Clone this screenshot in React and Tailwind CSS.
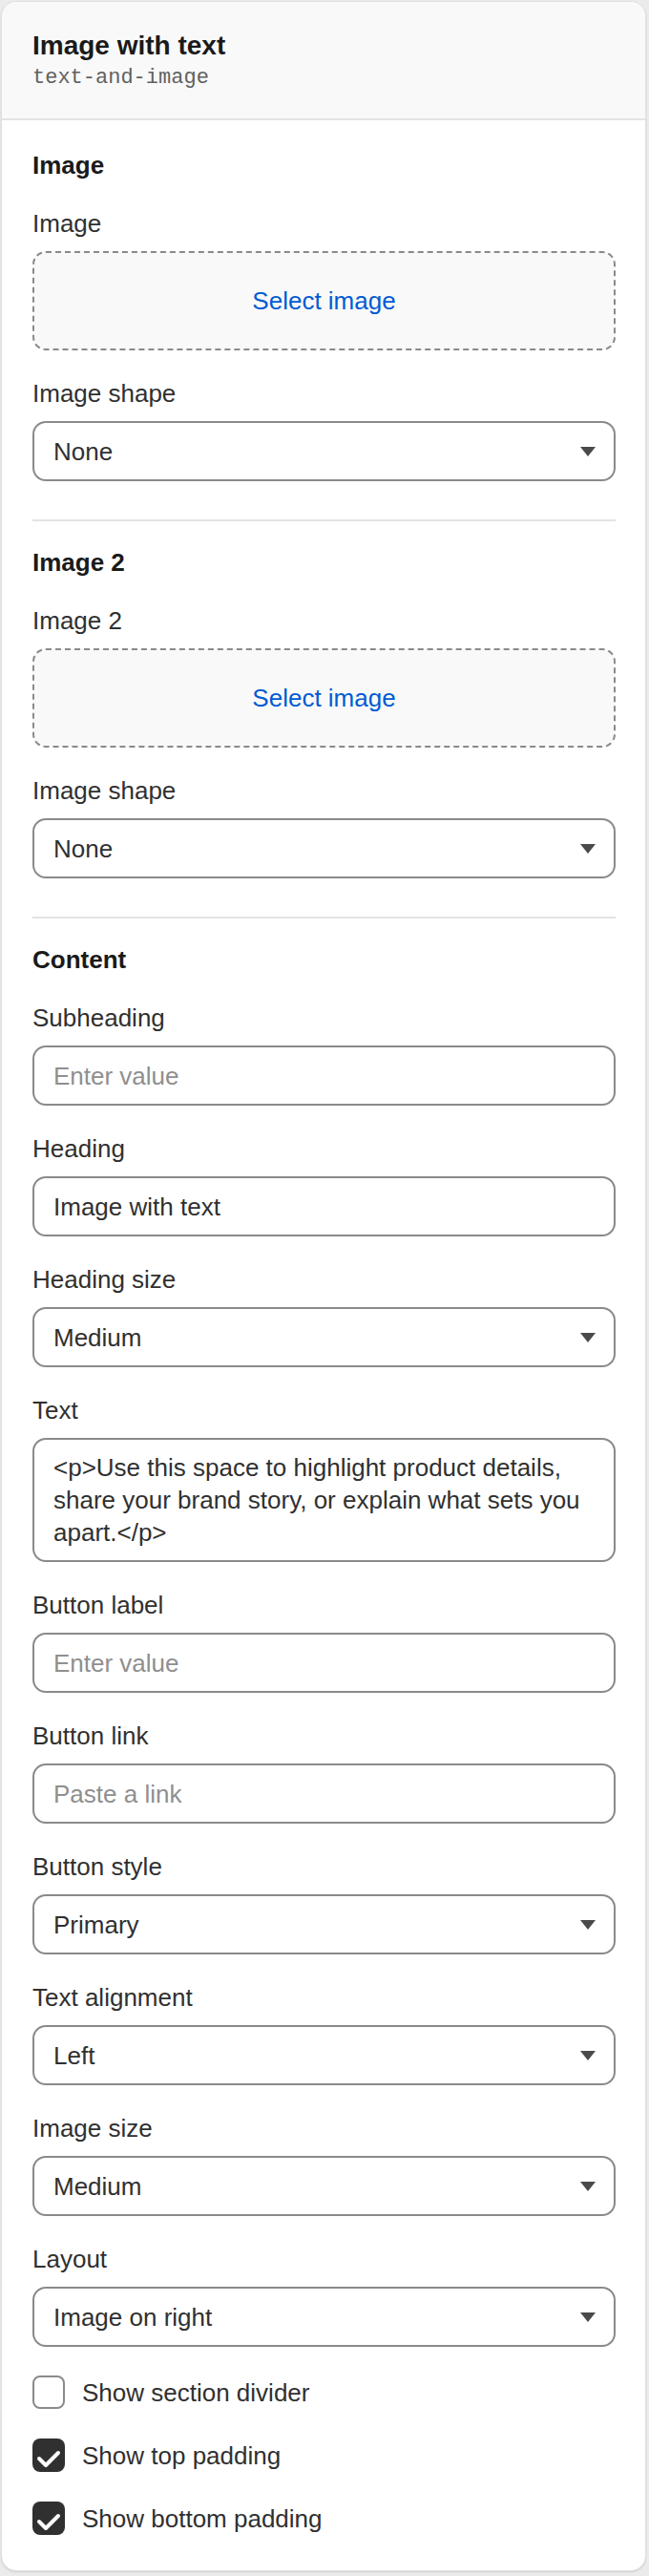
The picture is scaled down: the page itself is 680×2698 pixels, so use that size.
import React from "react";

const font = { fontFamily: '"Liberation Sans", Arial, sans-serif' };

const Label = ({ children }) => (
  <div className="text-[26px] leading-[32px] text-[#303030] mb-[13px]">{children}</div>
);

const SectionTitle = ({ children }) => (
  <h3 className="text-[26px] leading-[32px] font-bold text-[#1a1a1a]">{children}</h3>
);

const ImagePicker = ({ label }) => (
  <div>
    <Label>{label}</Label>
    <div className="h-[104px] flex items-center justify-center rounded-[14px] border-2 border-dashed border-[#8a8a8a] bg-[#f9f9f9]">
      <span className="text-[26px] leading-[32px] text-[#005bd3]">Select image</span>
    </div>
  </div>
);

const SelectField = ({ label, value }) => (
  <div>
    <Label>{label}</Label>
    <div className="h-[63px] flex items-center justify-between pl-[20px] pr-[19px] rounded-[14px] border-2 border-[#8a8a8a] bg-white">
      <span className="text-[26px] leading-[32px] text-[#303030]">{value}</span>
      <svg width="16" height="10" viewBox="0 0 16 10">
        <path d="M0 0 H16 L8 10 Z" fill="#4a4a4a" />
      </svg>
    </div>
  </div>
);

const TextField = ({ label, value, placeholder }) => (
  <div>
    <Label>{label}</Label>
    <div className="h-[63px] flex items-center pl-[20px] pr-[19px] rounded-[14px] border-2 border-[#8a8a8a] bg-white">
      {value ? (
        <span className="text-[26px] leading-[32px] text-[#303030]">{value}</span>
      ) : (
        <span className="text-[26px] leading-[32px] text-[#8f8f8f]">{placeholder}</span>
      )}
    </div>
  </div>
);

const Check = ({ checked, label }) => (
  <div className="h-[37px] flex items-center gap-[18px]">
    {checked ? (
      <div className="w-[34px] h-[35px] rounded-[8px] bg-[#303030] flex items-center justify-center">
        <svg width="34" height="35" viewBox="0 0 34 35">
          <path d="M7 21 L14 28 L27 15" fill="none" stroke="#fff" strokeWidth="4" strokeLinecap="round" strokeLinejoin="round" />
        </svg>
      </div>
    ) : (
      <div className="w-[34px] h-[35px] rounded-[8px] border-2 border-[#8a8a8a] bg-white" />
    )}
    <span className="text-[26px] leading-[32px] text-[#303030]">{label}</span>
  </div>
);

export default function App() {
  return (
    <div className="min-h-screen bg-[#ebebeb] pt-px pl-px pr-[3px] pb-[5px]" style={font}>
      <div className="bg-white rounded-[16px] border border-[#e0e0e0] overflow-hidden shadow-[0_1px_2px_rgba(0,0,0,0.12)]">
        {/* Header */}
        <div className="bg-[#f9f9f9] border-b-2 border-[#e3e3e3] pl-[32px] pr-[31px] pt-[29px] pb-[28px]">
          <h2 className="text-[28px] leading-[34px] font-bold text-[#1a1a1a]">Image with text</h2>
          <div
            className="mt-[3px] text-[22px] leading-[28px] text-[#616161]"
            style={{ fontFamily: '"Liberation Mono", "Courier New", monospace' }}
          >
            text-and-image
          </div>
        </div>

        <div className="pl-[32px] pr-[31px] pt-[31px] pb-[36px]">
          {/* Image */}
          <div className="flex flex-col gap-[29px] pb-[40px] border-b-2 border-[#e3e3e3]">
            <SectionTitle>Image</SectionTitle>
            <ImagePicker label="Image" />
            <SelectField label="Image shape" value="None" />
          </div>

          {/* Image 2 */}
          <div className="flex flex-col gap-[29px] pt-[27px] pb-[40px] border-b-2 border-[#e3e3e3]">
            <SectionTitle>Image 2</SectionTitle>
            <ImagePicker label="Image 2" />
            <SelectField label="Image shape" value="None" />
          </div>

          {/* Content */}
          <div className="flex flex-col gap-[29px] pt-[27px]">
            <SectionTitle>Content</SectionTitle>
            <TextField label="Subheading" placeholder="Enter value" />
            <TextField label="Heading" value="Image with text" />
            <SelectField label="Heading size" value="Medium" />
            <div>
              <Label>Text</Label>
              <div className="rounded-[14px] border-2 border-[#8a8a8a] bg-white pl-[20px] pr-[19px] py-[12px] h-[130px] text-[26px] leading-[34px] text-[#303030]">
                {"<p>Use this space to highlight product details, share your brand story, or explain what sets you apart.</p>"}
              </div>
            </div>
            <TextField label="Button label" placeholder="Enter value" />
            <TextField label="Button link" placeholder="Paste a link" />
            <SelectField label="Button style" value="Primary" />
            <SelectField label="Text alignment" value="Left" />
            <SelectField label="Image size" value="Medium" />
            <SelectField label="Layout" value="Image on right" />
            <Check label="Show section divider" />
            <Check checked label="Show top padding" />
            <Check checked label="Show bottom padding" />
          </div>
        </div>
      </div>
    </div>
  );
}
